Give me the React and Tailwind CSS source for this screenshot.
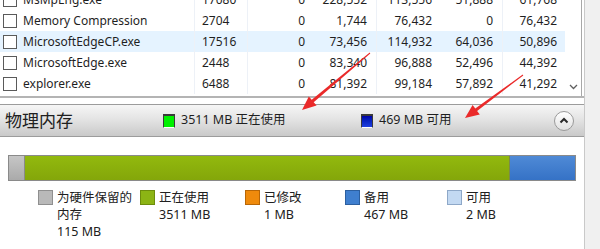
import React from "react";

const rows = [
  ["MsMpEng.exe", "17080", "0", "228,552", "113,556", "51,888", "61,768"],
  ["Memory Compression", "2704", "0", "1,744", "76,432", "0", "76,432"],
  ["MicrosoftEdgeCP.exe", "17516", "0", "73,456", "114,932", "64,036", "50,896"],
  ["MicrosoftEdge.exe", "2448", "0", "83,340", "96,888", "52,496", "44,392"],
  ["explorer.exe", "6488", "0", "81,392", "99,184", "57,892", "41,292"],
];

const legend = [
  { color: "bg-[#b9b9b9] border-[#8f8f8f]", lines: ["为硬件保留的", "内存", "115 MB"], w: "w-[102px]" },
  { color: "bg-[#8cb414] border-[#6d8c0c]", lines: ["正在使用", "3511 MB"], w: "w-[105px]" },
  { color: "bg-[#ef8a0c] border-[#b86606]", lines: ["已修改", "1 MB"], w: "w-[100px]" },
  { color: "bg-[#3f7fcf] border-[#2c5f9f]", lines: ["备用", "467 MB"], w: "w-[102px]" },
  { color: "bg-[#c3d9f2] border-[#8ea8c8]", lines: ["可用", "2 MB"], w: "w-[80px]" },
];

const Row = ({ r, active }) => (
  <div className={`flex h-[21px] items-center ${active ? "bg-[#e5f3ff]" : ""}`}>
    <div className="w-[195px] h-full flex items-center border-r border-[#edf1f7]">
      <span className="ml-[3px] w-[14px] h-[14px] border border-[#5a5a5a] bg-white" />
      <span className="ml-[6px]">{r[0]}</span>
    </div>
    <div className="w-[53px] h-full flex items-center pl-[7px] border-r border-[#edf1f7]">{r[1]}</div>
    <div className="w-[65px] h-full flex items-center justify-end pr-[8px]">{r[2]}</div>
    <div className="w-[64px] h-full flex items-center justify-end pr-[9px] border-r border-[#edf1f7]">{r[3]}</div>
    <div className="w-[63px] h-full flex items-center justify-end pr-[8px]">{r[4]}</div>
    <div className="w-[63px] h-full flex items-center justify-end pr-[9px] border-r border-[#edf1f7]">{r[5]}</div>
    <div className="w-[62px] h-full flex items-center justify-end pr-[8px]">{r[6]}</div>
  </div>
);

export default function App() {
  return (
    <div
      className="relative w-[600px] h-[249px] overflow-hidden bg-white flex text-[#1f1f1f]"
      style={{ fontFamily: '"Noto Sans", "Noto Sans CJK SC", sans-serif' }}
    >
      <div className="w-[585px] h-full flex flex-col border-r border-[#c9c9c9]">
        {/* process table */}
        <div className="h-[98px] flex border-b-2 border-[#b4b4b4] overflow-hidden text-[12px]">
          <div className="w-[565px] -mt-[11px]">
            {rows.map((r, i) => (
              <Row key={r[0]} r={r} active={i === 2} />
            ))}
          </div>
          <div className="w-[17px] flex flex-col justify-end items-center pb-[6px] border-r border-[#a8a8a8]">
            <svg width="9" height="6" viewBox="0 0 9 6">
              <path d="M1 1 L4.5 4.5 L8 1" fill="none" stroke="#606060" strokeWidth="1.3" />
            </svg>
          </div>
        </div>

        {/* header */}
        <div className="mt-[6px] h-[33px] flex items-center border-y border-[#9c9c9c] bg-linear-to-b from-[#f6f6f6] via-[#e2e2e2] to-[#c9c9c9]">
          <span className="ml-[5px] w-[158px] text-[17px] text-[#202020]">物理内存</span>
          <span className="w-[12px] h-[14px] border-t-2 border-x border-[#3a3a3a] border-b border-b-white bg-[#00f000]" />
          <span className="ml-[6px] w-[180px] text-[12.5px]">3511 MB 正在使用</span>
          <span className="w-[12px] h-[14px] border-t-2 border-x border-[#3a3a3a] border-b border-b-white bg-linear-to-b from-[#0000a8] to-[#1f3fe0]" />
          <span className="ml-[6px] text-[12.5px]">469 MB 可用</span>
          <span className="ml-auto mr-[10px] w-[20px] h-[20px] rounded-full border border-[#9a9a9a] bg-linear-to-b from-white to-[#e2e2e2] flex items-center justify-center">
            <svg width="10" height="7" viewBox="0 0 10 7">
              <path d="M1.5 5.5 L5 2 L8.5 5.5" fill="none" stroke="#2a2a2a" strokeWidth="2" />
            </svg>
          </span>
        </div>

        {/* memory bar */}
        <div className="mt-[18px] ml-[8px] w-[568px] h-[26px] flex border border-[#8a8a8a]">
          <div className="w-[16px] bg-linear-to-b from-[#c6c6c6] to-[#aaaaaa] border-r border-[#8a8a8a]" />
          <div className="w-[485px] bg-linear-to-b from-[#92b90e] to-[#84a60a] border-r border-[#7a8a4a]" />
          <div className="flex-1 bg-linear-to-b from-[#4f8ad6] to-[#3572c6]" />
        </div>

        {/* legend */}
        <div className="mt-[9px] pl-[38px] flex text-[12.5px] leading-[17px] text-[#202020]">
          {legend.map((l) => (
            <div key={l.lines[0]} className={`${l.w} flex`}>
              <span className={`w-[15px] h-[15px] border ${l.color}`} />
              <div className="ml-[4px] -mt-[1px]">
                {l.lines.map((t) => (
                  <div key={t}>{t}</div>
                ))}
              </div>
            </div>
          ))}
        </div>
      </div>
      <div className="flex-1 bg-[#f0f0f0]" />

      {/* red annotation arrows */}
      <svg className="absolute inset-0 pointer-events-none" width="600" height="249">
        <polygon
          points="370.3,53.4 369.7,52.6 311.7,99.8 308.8,96.4 302,110 316.6,105.6 313.7,102.2"
          fill="#ea2a2a"
        />
        <polygon
          points="523.3,75.4 522.7,74.6 475.3,108.5 472.6,104.9 465,118 479.8,114.5 477.1,110.9"
          fill="#ea2a2a"
        />
      </svg>
    </div>
  );
}
